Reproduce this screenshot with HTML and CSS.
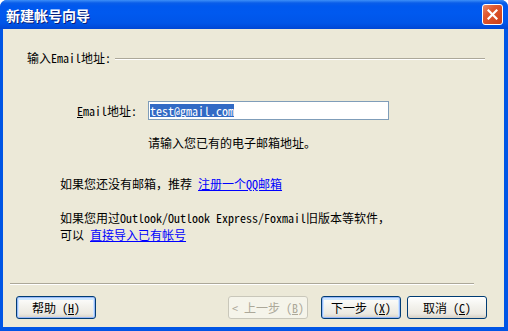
FILE: index.html
```html
<!DOCTYPE html>
<html lang="zh-CN">
  <head>
    <meta charset="UTF-8" />
    <meta name="viewport" content="width=device-width, initial-scale=1.0" />
    <link rel="stylesheet" href="styles.css">
  </head>
  <body>
    <div class="window">
      <div class="titlebar">
        <span class="title">新建帐号向导</span>
        <button class="close" aria-label="关闭">
          <svg width="11" height="11" viewBox="0 0 11 11">
            <path d="M1.5 1.5 L9.5 9.5 M9.5 1.5 L1.5 9.5" stroke="#fff" stroke-width="2.2" stroke-linecap="square" fill="none" />
          </svg>
        </button>
      </div>

      <div class="content">
        <div class="group-head">
          <span>输入Email地址:</span>
          <span class="rule"></span>
        </div>

        <div class="field-row">
          <label class="field-label"><u>E</u>mail地址:</label>
          <div class="input"><span class="selected">test@gmail.com</span></div>
        </div>

        <p class="hint">请输入您已有的电子邮箱地址。</p>

        <p class="note first">如果您还没有邮箱，推荐 <a href="#">注册一个QQ邮箱</a></p>
        <p class="note">如果您用过Outlook/Outlook Express/Foxmail旧版本等软件，<br>可以 <a href="#">直接导入已有帐号</a></p>

        <div class="footer">
          <div class="separator"></div>
          <div class="buttons">
            <button class="btn focus">帮助 (<u>H</u>)</button>
            <span class="spacer"></span>
            <button class="btn" disabled>&lt; 上一步 (<u>B</u>)</button>
            <button class="btn focus next">下一步 (<u>X</u>)</button>
            <button class="btn">取消 (<u>C</u>)</button>
          </div>
        </div>
      </div>
    </div>
  </body>
</html>
```

FILE: styles.css
```css
body {
  margin: 0;
  background: #ffffff;
  font-family: "Noto Sans Mono CJK SC", "Noto Sans CJK SC", sans-serif;
  font-size: 12px;
  line-height: 14px;
  color: #000;
}

.window {
  display: flex;
  flex-direction: column;
  width: 508px;
  height: 331px;
  box-sizing: border-box;
  background: #0055e5;
  border-radius: 7px 7px 0 0;
  overflow: hidden;
}

.titlebar {
  display: flex;
  align-items: center;
  height: 29px;
  flex-shrink: 0;
  padding: 0 6px 0 6px;
  background: linear-gradient(to bottom, #3d8ff8 0, #0a5de9 3px, #0058ee 6px, #0059ef 45%, #0055e8 80%, #0046d4 100%);
}

.title {
  font-size: 14px;
  font-weight: bold;
  color: #fff;
  text-shadow: 1px 1px 0 #0a1e79;
  letter-spacing: 0;
}

.close {
  margin-left: auto;
  margin-right: -1px;
  width: 21px;
  height: 21px;
  padding: 0;
  display: flex;
  align-items: center;
  justify-content: center;
  border: 1px solid #fff;
  border-radius: 3px;
  background: linear-gradient(135deg, #e88a6a 0, #e0582f 35%, #cc3e19 100%);
}

.content {
  display: flex;
  flex-direction: column;
  flex: 1;
  margin: 0 4px 4px 3px;
  background: #ece9d8;
}

.group-head {
  display: flex;
  align-items: center;
  gap: 4px;
  margin: 22px 19px 0 24px;
}

.rule {
  flex: 1;
  height: 0;
  border-top: 1px solid #aca899;
  border-bottom: 1px solid #fff;
  margin-top: 1px;
}

.field-row {
  display: flex;
  align-items: center;
  margin-top: 36px;
}

.field-label {
  width: 71px;
  padding-left: 74px;
}

.input {
  display: flex;
  align-items: center;
  width: 241px;
  height: 19px;
  box-sizing: border-box;
  padding-left: 1px;
  background: #fff;
  border: 1px solid #7f9db9;
}

.selected {
  background: #316ac5;
  color: #fff;
  line-height: 13px;
}

.hint {
  margin: 16px 0 0 145px;
}

.note {
  margin: 17px 0 0 57px;
  line-height: 17px;
}

.note.first {
  margin-top: 25px;
}

.note a {
  color: #0000ff;
  text-decoration: underline;
}

.footer {
  margin-top: auto;
  padding: 0 17px 8px 13px;
}

.separator {
  height: 0;
  margin: 0 13px 11px -6px;
  border-top: 1px solid #aca899;
  border-bottom: 1px solid #fff;
}

.buttons {
  display: flex;
  align-items: center;
  gap: 6px;
}

.spacer {
  flex: 1;
}

.btn {
  width: 80px;
  height: 23px;
  padding: 0;
  font-family: inherit;
  font-size: 12px;
  color: #000;
  border: 1px solid #003c74;
  border-radius: 3px;
  background: linear-gradient(to bottom, #ffffff 0, #f4f3ee 40%, #ebe9e1 80%, #d6d0c5 100%);
}

.btn.focus {
  box-shadow: inset 0 0 0 1px #98b8f8, inset 0 1px 0 2px #cee7ff;
}

.btn.next {
  margin-left: 7px;
}

.btn:disabled {
  color: #aca899;
  border-color: #c9c7ba;
  background: #f5f4ea;
}
```
